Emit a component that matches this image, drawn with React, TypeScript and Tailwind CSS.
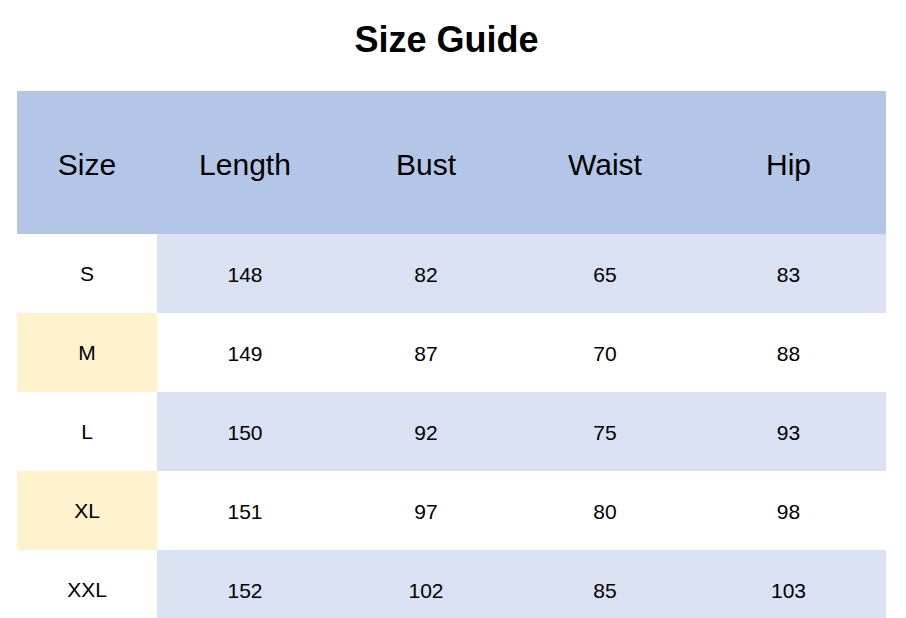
const headers = ['Size', 'Length', 'Bust', 'Waist', 'Hip']

const rows = [
  { size: 'S', values: [148, 82, 65, 83] },
  { size: 'M', values: [149, 87, 70, 88] },
  { size: 'L', values: [150, 92, 75, 93] },
  { size: 'XL', values: [151, 97, 80, 98] },
  { size: 'XXL', values: [152, 102, 85, 103] },
]

export default function App() {
  return (
    <div
      className="w-[906px] h-[618px] overflow-hidden bg-white text-black"
      style={{ fontFamily: '"Liberation Sans", Arial, sans-serif' }}
    >
      <h1 className="pt-[18px] pr-[13px] h-[91px] text-center text-[36px] leading-[44px] font-bold">
        Size Guide
      </h1>

      <div className="ml-[17px] w-[869px] grid grid-cols-[140px_176px_186px_172px_195px]">
        {headers.map((h) => (
          <div
            key={h}
            className="h-[143px] bg-[#b4c6e7] flex items-center justify-center pt-[4px] text-[30px]"
          >
            {h}
          </div>
        ))}

        {rows.map((row, i) => {
          const banded = i % 2 === 0
          return (
            <div key={row.size} className="contents">
              <div
                className={`h-[79px] flex items-center justify-center text-[21px] ${
                  banded ? 'bg-white' : 'bg-[#fff2cc]'
                }`}
              >
                {row.size}
              </div>
              {row.values.map((v, j) => (
                <div
                  key={j}
                  className={`h-[79px] flex items-center justify-center pt-[3px] text-[21px] ${
                    banded ? 'bg-[#d9e1f2]' : 'bg-white'
                  }`}
                >
                  {v}
                </div>
              ))}
            </div>
          )
        })}
      </div>
    </div>
  )
}
